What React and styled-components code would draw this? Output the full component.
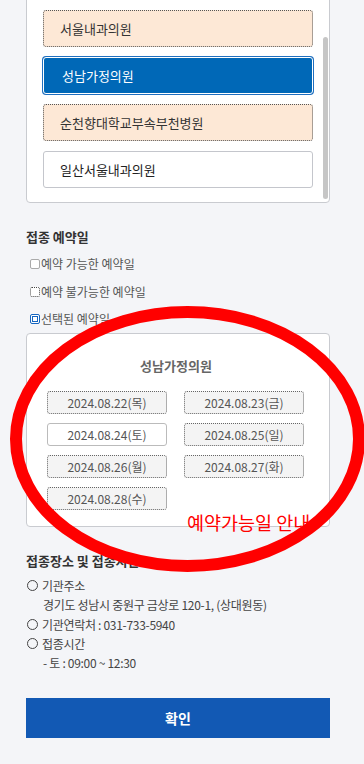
import React from "react";
import styled, { createGlobalStyle, css } from "styled-components";

const GlobalStyle = createGlobalStyle`
  html, body {
    margin: 0;
    padding: 0;
    background: #f4f5f8;
  }
  body {
    font-family: "Noto Sans CJK KR", "Noto Sans", sans-serif;
    color: #333;
  }
`;

const Screen = styled.div`
  position: relative;
  width: 364px;
  height: 764px;
  overflow: hidden;
  background: #f4f5f8;
`;

const Page = styled.div`
  margin-top: -52px;
  margin-left: 26px;
  width: 304px;
  display: flex;
  flex-direction: column;
`;

const ListPanel = styled.div`
  position: relative;
  background: #fff;
  border: 1px solid #c9cbd0;
  border-radius: 4px;
  padding: 14px 0 14px 16px;
  display: flex;
  flex-direction: column;
  gap: 10px;
`;

const Thumb = styled.div`
  position: absolute;
  right: 1px;
  bottom: 3px;
  width: 5px;
  height: 162px;
  border-radius: 3px;
  background: #c6c6c6;
`;

const Clinic = styled.div`
  box-sizing: border-box;
  width: 270px;
  height: 37px;
  display: flex;
  align-items: center;
  padding-left: 16px;
  font-size: 13px;
  border-radius: 3px;
  ${(p) =>
    p.kind === "off" &&
    css`
      background: #fde8d6;
      border: 1px dotted #555;
      color: #333;
    `}
  ${(p) =>
    p.kind === "on" &&
    css`
      background: #0068b7;
      border: 1px solid #fff;
      box-shadow: 0 0 0 1px #1f6fbf;
      color: #fff;
      padding-left: 18px;
    `}
  ${(p) =>
    p.kind === "open" &&
    css`
      background: #fff;
      border: 1px solid #c4c6cc;
      color: #222;
    `}
`;

const Heading = styled.div`
  font-size: 13px;
  font-weight: 700;
  line-height: 18px;
  color: #333;
  margin-top: ${(p) => p.top}px;
`;

const Legend = styled.div`
  display: flex;
  flex-direction: column;
  gap: 9.5px;
  margin-top: 9px;
  padding-left: 4px;
`;

const LegendRow = styled.div`
  display: flex;
  align-items: center;
  font-size: 12px;
  line-height: 18px;
  color: #555;
`;

const Swatch = styled.span`
  box-sizing: border-box;
  width: 10px;
  height: 10px;
  margin-right: 1px;
  border-radius: 2px;
  display: inline-flex;
  align-items: center;
  justify-content: center;
  ${(p) => p.kind === "open" && css`border: 1px solid #aaa; background: #fff;`}
  ${(p) => p.kind === "off" && css`border: 1px dotted #444; background: #fff;`}
  ${(p) =>
    p.kind === "on" &&
    css`
      border: 1px solid #1565c0;
      background: #fff;
      &::after {
        content: "";
        width: 4px;
        height: 4px;
        border: 1px solid #1565c0;
      }
    `}
`;

const DatePanel = styled.div`
  margin-top: 5px;
  background: #fff;
  border: 1px solid #c9cbd0;
  border-radius: 4px;
  padding: 23px 24px 16px 20px;
  display: flex;
  flex-direction: column;
  align-items: center;
`;

const PanelTitle = styled.div`
  font-size: 13px;
  font-weight: 700;
  line-height: 18px;
  color: #666;
`;

const DateGrid = styled.div`
  margin-top: 16px;
  display: grid;
  grid-template-columns: 120px 120px;
  column-gap: 17px;
  row-gap: 9px;
  align-self: flex-start;
`;

const DateBtn = styled.div`
  box-sizing: border-box;
  height: 23px;
  display: flex;
  align-items: center;
  justify-content: center;
  font-size: 12px;
  color: #555;
  border-radius: 3px;
  background: ${(p) => (p.open ? "#fff" : "#f4f4f4")};
  border: 1px ${(p) => (p.open ? "solid #bbb" : "dotted #666")};
`;

const InfoList = styled.div`
  margin-top: 6px;
  display: flex;
  flex-direction: column;
  font-size: 12px;
  line-height: 19.3px;
  color: #444;
  letter-spacing: -0.3px;
`;

const InfoRow = styled.div`
  display: flex;
  align-items: center;
  padding-left: ${(p) => (p.indent ? 17 : 1)}px;
`;

const Dot = styled.span`
  box-sizing: border-box;
  width: 11px;
  height: 11px;
  border: 1px solid #444;
  border-radius: 50%;
  margin-right: 4px;
`;

const Confirm = styled.button`
  margin-top: 26px;
  height: 40px;
  border: 0;
  background: #1259b4;
  color: #fff;
  font-family: inherit;
  font-size: 14px;
  font-weight: 700;
`;

const Overlay = styled.svg`
  position: absolute;
  left: 0;
  top: 0;
  pointer-events: none;
`;

const Note = styled.div`
  position: absolute;
  left: 187px;
  top: 509px;
  font-size: 18.5px;
  line-height: 26px;
  color: #ff0000;
  white-space: nowrap;
`;

// first entry is scrolled out of view above the top edge
const clinics = [
  { name: "", kind: "off" },
  { name: "서울내과의원", kind: "off" },
  { name: "성남가정의원", kind: "on" },
  { name: "순천향대학교부속부천병원", kind: "off" },
  { name: "일산서울내과의원", kind: "open" },
];

const dates = [
  ["2024.08.22(목)", false],
  ["2024.08.23(금)", false],
  ["2024.08.24(토)", true],
  ["2024.08.25(일)", false],
  ["2024.08.26(월)", false],
  ["2024.08.27(화)", false],
  ["2024.08.28(수)", false],
];

export default function App() {
  return (
    <Screen>
      <GlobalStyle />
      <Page>
        <ListPanel>
          {clinics.map((c, i) => (
            <Clinic key={i} kind={c.kind}>
              {c.name}
            </Clinic>
          ))}
          <Thumb />
        </ListPanel>

        <Heading top={25}>접종 예약일</Heading>
        <Legend>
          <LegendRow>
            <Swatch kind="open" />
            예약 가능한 예약일
          </LegendRow>
          <LegendRow>
            <Swatch kind="off" />
            예약 불가능한 예약일
          </LegendRow>
          <LegendRow>
            <Swatch kind="on" />
            선택된 예약일
          </LegendRow>
        </Legend>

        <DatePanel>
          <PanelTitle>성남가정의원</PanelTitle>
          <DateGrid>
            {dates.map(([d, open]) => (
              <DateBtn key={d} open={open}>
                {d}
              </DateBtn>
            ))}
          </DateGrid>
        </DatePanel>

        <Heading top={25}>접종장소 및 접종시간</Heading>
        <InfoList>
          <InfoRow>
            <Dot />
            기관주소
          </InfoRow>
          <InfoRow indent>경기도 성남시 중원구 금상로 120-1, (상대원동)</InfoRow>
          <InfoRow>
            <Dot />
            기관연락처 : 031-733-5940
          </InfoRow>
          <InfoRow>
            <Dot />
            접종시간
          </InfoRow>
          <InfoRow indent>- 토 : 09:00 ~ 12:30</InfoRow>
        </InfoList>

        <Confirm>확인</Confirm>
      </Page>

      <Note>예약가능일 안내</Note>
      <Overlay width="364" height="764" viewBox="0 0 364 764">
        <ellipse cx="187.5" cy="439" rx="171.5" ry="127" fill="none" stroke="#ff0000" strokeWidth="12" />
      </Overlay>
    </Screen>
  );
}
